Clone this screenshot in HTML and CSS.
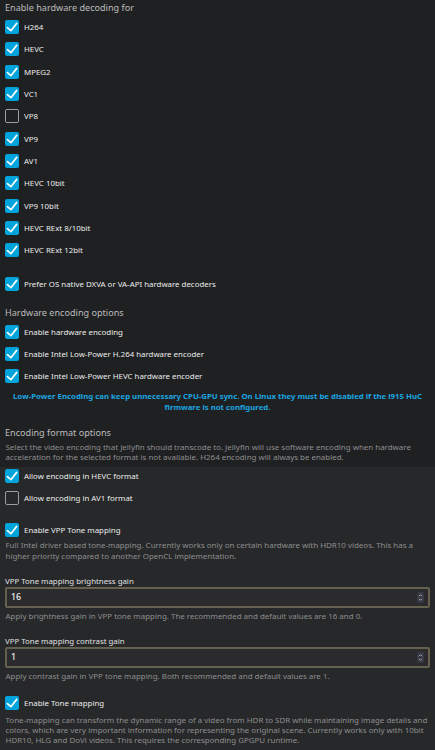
FILE: index.html
```html
<!DOCTYPE html>
<html lang="en">
<head>
<meta charset="utf-8">
<title>Transcoding</title>
<link rel="stylesheet" href="styles.css">
</head>
<body>
<svg width="0" height="0" class="defs" aria-hidden="true">
  <symbol id="tick" viewBox="0 0 14 14">
    <path d="M2.4 7.6 L5.9 10.7 L11.7 3.4" fill="none" stroke="#fff" stroke-width="1.7" stroke-linecap="round" stroke-linejoin="round"/>
  </symbol>
</svg>

<main class="page">
  <section class="block dark">
    <h2 class="title title-first">Enable hardware decoding for</h2>
    <div class="check-list">
      <label class="check on"><span class="box"><svg><use href="#tick"/></svg></span><span class="text">H264</span></label>
      <label class="check on"><span class="box"><svg><use href="#tick"/></svg></span><span class="text">HEVC</span></label>
      <label class="check on"><span class="box"><svg><use href="#tick"/></svg></span><span class="text">MPEG2</span></label>
      <label class="check on"><span class="box"><svg><use href="#tick"/></svg></span><span class="text">VC1</span></label>
      <label class="check"><span class="box"></span><span class="text">VP8</span></label>
      <label class="check on"><span class="box"><svg><use href="#tick"/></svg></span><span class="text">VP9</span></label>
      <label class="check on"><span class="box"><svg><use href="#tick"/></svg></span><span class="text">AV1</span></label>
      <label class="check on"><span class="box"><svg><use href="#tick"/></svg></span><span class="text">HEVC 10bit</span></label>
      <label class="check on"><span class="box"><svg><use href="#tick"/></svg></span><span class="text">VP9 10bit</span></label>
      <label class="check on"><span class="box"><svg><use href="#tick"/></svg></span><span class="text">HEVC RExt 8/10bit</span></label>
      <label class="check on"><span class="box"><svg><use href="#tick"/></svg></span><span class="text">HEVC RExt 12bit</span></label>
    </div>

    <label class="check on prefer"><span class="box"><svg><use href="#tick"/></svg></span><span class="text">Prefer OS native DXVA or VA-API hardware decoders</span></label>

    <h2 class="title title-enc">Hardware encoding options</h2>
    <div class="check-list">
      <label class="check on"><span class="box"><svg><use href="#tick"/></svg></span><span class="text">Enable hardware encoding</span></label>
      <label class="check on"><span class="box"><svg><use href="#tick"/></svg></span><span class="text">Enable Intel Low-Power H.264 hardware encoder</span></label>
      <label class="check on"><span class="box"><svg><use href="#tick"/></svg></span><span class="text">Enable Intel Low-Power HEVC hardware encoder</span></label>
    </div>

    <p class="note">Low-Power Encoding can keep unnecessary CPU-GPU sync. On Linux they must be disabled if the i915 HuC firmware is not configured.</p>

    <h2 class="title title-format">Encoding format options</h2>
    <p class="desc desc-format">Select the video encoding that Jellyfin should transcode to. Jellyfin will use software encoding when hardware acceleration for the selected format is not available. H264 encoding will always be enabled.</p>
  </section>

  <section class="block light">
    <div class="check-list format-list">
      <label class="check on"><span class="box"><svg><use href="#tick"/></svg></span><span class="text">Allow encoding in HEVC format</span></label>
      <label class="check"><span class="box"></span><span class="text">Allow encoding in AV1 format</span></label>
    </div>

    <label class="check on vpp"><span class="box"><svg><use href="#tick"/></svg></span><span class="text">Enable VPP Tone mapping</span></label>
    <p class="desc desc-vpp">Full Intel driver based tone-mapping. Currently works only on certain hardware with HDR10 videos. This has a higher priority compared to another OpenCL implementation.</p>

    <div class="field field-first">
      <label class="field-label" for="vppBrightness">VPP Tone mapping brightness gain</label>
      <div class="input">
        <span class="value" id="vppBrightness">16</span>
        <span class="spin"><svg viewBox="0 0 7 11"><rect x="0" y="0" width="7" height="11" rx="1.5" fill="#383844"/><path d="M2 4.2 L3.5 2.7 L5 4.2 M2 6.8 L3.5 8.3 L5 6.8" fill="none" stroke="#b9b9c4" stroke-width="0.9"/></svg></span>
      </div>
      <p class="desc help">Apply brightness gain in VPP tone mapping. The recommended and default values are 16 and 0.</p>
    </div>

    <div class="field field-second">
      <label class="field-label" for="vppContrast">VPP Tone mapping contrast gain</label>
      <div class="input">
        <span class="value" id="vppContrast">1</span>
        <span class="spin"><svg viewBox="0 0 7 11"><rect x="0" y="0" width="7" height="11" rx="1.5" fill="#383844"/><path d="M2 4.2 L3.5 2.7 L5 4.2 M2 6.8 L3.5 8.3 L5 6.8" fill="none" stroke="#b9b9c4" stroke-width="0.9"/></svg></span>
      </div>
      <p class="desc help">Apply contrast gain in VPP tone mapping. Both recommended and default values are 1.</p>
    </div>

    <label class="check on tone"><span class="box"><svg><use href="#tick"/></svg></span><span class="text">Enable Tone mapping</span></label>
    <p class="desc desc-tone">Tone-mapping can transform the dynamic range of a video from HDR to SDR while maintaining image details and colors, which are very important information for representing the original scene. Currently works only with 10bit HDR10, HLG and DoVi videos. This requires the corresponding GPGPU runtime.</p>
  </section>
</main>
</body>
</html>
```

FILE: styles.css
```css
html, body {
  margin: 0;
  padding: 0;
}

body {
  background: #1f2022;
  font-family: "Noto Sans", "Open Sans", sans-serif;
  color: #e4e4e4;
  height: 750px;
  overflow: hidden;
}

.defs {
  position: absolute;
}

.page {
  display: flex;
  flex-direction: column;
}

.block {
  display: flex;
  flex-direction: column;
  padding: 0 5px;
}

.dark {
  padding-bottom: 4.2px;
}

.light {
  background: #27282a;
  min-height: 290px;
}

/* section headings */
.title {
  margin: 0;
  font-size: 9.1px;
  font-weight: 400;
  line-height: 15px;
  height: 15px;
  color: #bcbcbc;
  white-space: nowrap;
}

.title-first {
  height: 16px;
}

.title-enc {
  margin-top: 10.35px;
}

.title-format {
  margin-top: 13px;
}

/* checkbox rows */
.check-list {
  display: flex;
  flex-direction: column;
}

.check {
  display: flex;
  align-items: center;
  gap: 5px;
  height: 22.3px;
  flex: none;
}

.box {
  width: 14px;
  height: 14px;
  box-sizing: border-box;
  border-radius: 2px;
  border: 1.6px solid #9c9c9c;
  flex: none;
  display: flex;
}

.check.on .box {
  background: #00a4dc;
  border: none;
}

.box svg {
  width: 14px;
  height: 14px;
}

.text {
  font-size: 7.88px;
  font-weight: 400;
  color: #ececec;
  white-space: nowrap;
}

.prefer {
  margin-top: 11.55px;
}

.format-list {
  margin-top: -2.15px;
}

.vpp {
  margin-top: 9.4px;
}

.tone {
  margin-top: 10.45px;
}

/* blue warning */
.note {
  margin: 4px 0 0;
  font-size: 7.8px;
  font-weight: 700;
  line-height: 10.5px;
  color: #1ba6e0;
  text-align: center;
}

/* grey descriptions */
.desc {
  margin: 0;
  font-size: 7.95px;
  line-height: 10.4px;
  color: #8e8e8e;
  padding-left: 0.5px;
}

.desc-format {
  margin-top: 1.2px;
  line-height: 10.6px;
}

.desc-vpp {
  margin-top: -0.8px;
}

.desc-tone {
  line-height: 10.3px;
}

/* numeric fields */
.field {
  display: flex;
  flex-direction: column;
}

.field-first {
  margin-top: 13.85px;
}

.field-second {
  margin-top: 13.1px;
}

.field-label {
  font-size: 7.85px;
  font-weight: 400;
  line-height: 12px;
  height: 12px;
  color: #e0e0e0;
}

.input {
  height: 21px;
  box-sizing: border-box;
  border: 2px solid #66614f;
  border-radius: 2px;
  background: #2b2b2d;
  display: flex;
  align-items: center;
  justify-content: space-between;
  padding: 0 4px 0 4px;
}

.value {
  font-size: 8.8px;
  font-weight: 500;
  color: #f0f0f0;
}

.spin {
  display: flex;
}

.spin svg {
  width: 7px;
  height: 11px;
}

.help {
  margin-top: 3.5px;
}
```
